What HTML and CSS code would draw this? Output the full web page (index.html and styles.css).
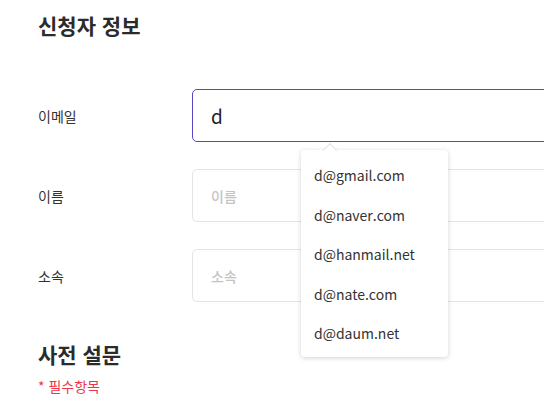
FILE: index.html
```html
<!DOCTYPE html>
<html lang="ko">
<head>
  <meta charset="UTF-8">
  <meta name="viewport" content="width=device-width, initial-scale=1.0">
  <title>신청서</title>
  <link rel="stylesheet" href="styles.css">
</head>
<body>
  <div class="form-wrap">
    <h2 class="section-title">신청자 정보</h2>

    <div class="field">
      <label for="email">이메일</label>
      <div class="input-box">
        <input type="text" id="email" class="active" value="d">
        <ul class="suggest">
          <li>d@gmail.com</li>
          <li>d@naver.com</li>
          <li>d@hanmail.net</li>
          <li>d@nate.com</li>
          <li>d@daum.net</li>
        </ul>
      </div>
    </div>

    <div class="field">
      <label for="name">이름</label>
      <div class="input-box">
        <input type="text" id="name" placeholder="이름">
      </div>
    </div>

    <div class="field">
      <label for="org">소속</label>
      <div class="input-box">
        <input type="text" id="org" placeholder="소속">
      </div>
    </div>

    <h2 class="section-title survey">사전 설문</h2>
    <p class="required">* 필수항목</p>
  </div>
</body>
</html>
```

FILE: styles.css
```css
html, body {
  margin: 0;
  padding: 0;
  overflow: hidden;
}

body {
  font-family: "Noto Sans CJK KR", "Noto Sans", sans-serif;
  color: #333333;
  background-color: #ffffff;
}

.form-wrap {
  padding: 10px 0 0 38px;
  overflow: hidden;
}

.section-title {
  margin: 0;
  font-size: 21px;
  font-weight: 700;
  line-height: 30px;
  color: #2b2b2b;
}

.field {
  display: flex;
  align-items: center;
  margin-top: 27px;
}

.form-wrap > .section-title + .field {
  margin-top: 49px;
}

.field label {
  width: 154px;
  flex-shrink: 0;
  font-size: 14px;
  color: #333333;
}

.input-box {
  position: relative;
  flex: 1;
}

/* the inputs run on past the right edge of the page */
.input-box input {
  box-sizing: border-box;
  width: calc(100% + 40px);
  height: 53px;
  padding: 0 18px;
  border: 1px solid #e4e4e4;
  border-radius: 5px;
  font-family: "Noto Sans CJK KR", "Noto Sans", sans-serif;
  font-size: 14px;
  font-weight: 500;
  color: #333333;
  outline: none;
}

.input-box input::placeholder {
  color: #c4c4c4;
}

.input-box input.active {
  border-color: #5a46c2;
  font-size: 19px;
  font-weight: 400;
  color: #222222;
}

.suggest {
  position: absolute;
  top: 61px;
  left: 109px;
  width: 147px;
  margin: 0;
  padding: 6px 0 3px;
  list-style: none;
  background-color: #ffffff;
  border-radius: 4px;
  box-shadow: 0 1px 5px rgba(0, 0, 0, 0.18);
  z-index: 2;
}

/* little pointer above the list */
.suggest::before {
  content: "";
  position: absolute;
  top: -5px;
  left: 24px;
  width: 9px;
  height: 9px;
  background-color: #ffffff;
  border-top: 1px solid #e2e2e2;
  border-left: 1px solid #e2e2e2;
  transform: rotate(45deg);
}

.suggest li {
  height: 39.5px;
  line-height: 39.5px;
  padding-left: 13px;
  font-size: 14px;
  color: #333333;
}

.survey {
  margin-top: 37px;
}

.required {
  margin: 7px 0 0;
  font-size: 14px;
  color: #f0344a;
}
```
